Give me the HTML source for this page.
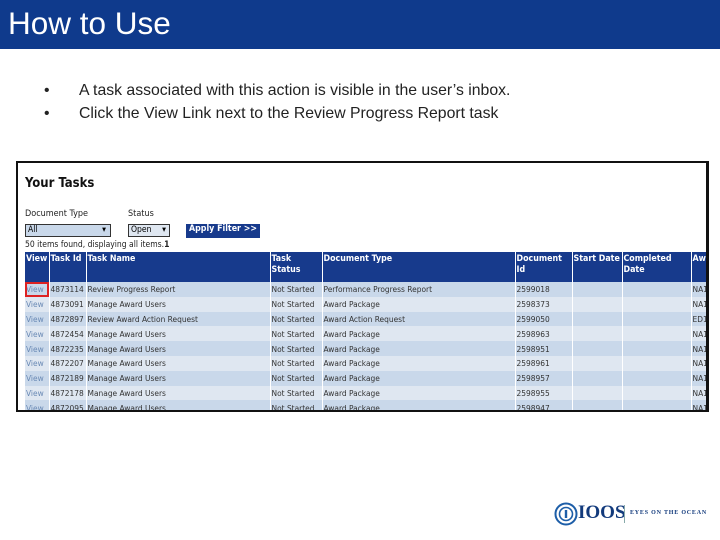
<!DOCTYPE html>
<html><head><meta charset="utf-8"><style>
*{margin:0;padding:0;box-sizing:border-box}
body{width:720px;height:540px;background:#fff;position:relative;overflow:hidden;font-family:"Liberation Sans",sans-serif}
.hdr{position:absolute;left:0;top:0;width:720px;height:49px;background:#0f3a8c}
.hdr h1{position:absolute;left:8px;top:5px;font-size:31.5px;font-weight:normal;color:#fff}
.b{position:absolute;font-size:15.8px;color:#222;white-space:nowrap}
.shot{position:absolute;left:16px;top:161px;width:693px;height:251px;border:2px solid #111;border-right-width:3px;background:#fff;overflow:hidden;font-family:"DejaVu Sans Condensed","DejaVu Sans",sans-serif}
.t{position:absolute;font-size:10px;color:#222;white-space:nowrap}
table{position:absolute;left:7px;top:89px;border-collapse:collapse;font-size:8.3px;table-layout:fixed;width:700px}
td,th{padding:0 1px;height:14.8px;white-space:nowrap;overflow:hidden;text-align:left;border-right:1px solid #fff;line-height:14px}
th{background:#173a8c;color:#fff;height:30px;vertical-align:top;line-height:11px;padding-top:2px;font-size:8.8px}
tr.a td{background:#c9d8ea}
tr.c td{background:#dfe7f1}
td{color:#333}
td.v{color:#6a8ab5}
</style></head><body>
<div class="hdr"><h1>How to Use</h1></div>
<div class="b" style="left:44px;top:82px">•</div>
<div class="b" style="left:79px;top:82px">A task associated with this action is visible in the user’s inbox.</div>
<div class="b" style="left:44px;top:105px">•</div>
<div class="b" style="left:79px;top:105px">Click the View Link next to the Review Progress Report task</div>
<div class="shot">
<div class="t" style="left:7px;top:13px;font-size:13px;font-weight:bold;color:#111">Your Tasks</div>
<div class="t" style="left:7px;top:46px;font-size:9px">Document Type</div>
<div class="t" style="left:110px;top:46px;font-size:9px">Status</div>
<div style="position:absolute;left:7px;top:61px;width:86px;height:13px;border:1px solid #333;background:#c9d8ea;font-size:8.5px;padding-left:2px">All<span style="position:absolute;right:4px">▾</span></div>
<div style="position:absolute;left:110px;top:61px;width:42px;height:13px;border:1px solid #333;background:#dfe7f1;font-size:8.5px;padding-left:2px">Open<span style="position:absolute;right:3px">▾</span></div>
<div style="position:absolute;left:168px;top:61px;width:74px;height:14px;background:#173a8c;color:#fff;font-size:8.8px;font-weight:bold;padding-left:3px;white-space:nowrap">Apply Filter &gt;&gt;</div>
<div class="t" style="left:7px;top:77px;font-size:8.5px">50 items found, displaying all items.<b>1</b></div>
<table>
<colgroup><col style="width:24px"><col style="width:37px"><col style="width:184px"><col style="width:52px"><col style="width:193px"><col style="width:57px"><col style="width:50px"><col style="width:69px"><col style="width:34px"></colgroup>
<tr><th>View</th><th>Task Id</th><th>Task Name</th><th>Task<br>Status</th><th>Document Type</th><th>Document<br>Id</th><th>Start Date</th><th>Completed<br>Date</th><th>Aw</th></tr>
<tr class="a"><td class="v" style="outline:2px solid #d22;outline-offset:-2px">View</td><td>4873114</td><td>Review Progress Report</td><td>Not Started</td><td>Performance Progress Report</td><td>2599018</td><td></td><td></td><td>NA1</td></tr>
<tr class="c"><td class="v">View</td><td>4873091</td><td>Manage Award Users</td><td>Not Started</td><td>Award Package</td><td>2598373</td><td></td><td></td><td>NA1</td></tr>
<tr class="a"><td class="v">View</td><td>4872897</td><td>Review Award Action Request</td><td>Not Started</td><td>Award Action Request</td><td>2599050</td><td></td><td></td><td>ED1</td></tr>
<tr class="c"><td class="v">View</td><td>4872454</td><td>Manage Award Users</td><td>Not Started</td><td>Award Package</td><td>2598963</td><td></td><td></td><td>NA1</td></tr>
<tr class="a"><td class="v">View</td><td>4872235</td><td>Manage Award Users</td><td>Not Started</td><td>Award Package</td><td>2598951</td><td></td><td></td><td>NA1</td></tr>
<tr class="c"><td class="v">View</td><td>4872207</td><td>Manage Award Users</td><td>Not Started</td><td>Award Package</td><td>2598961</td><td></td><td></td><td>NA1</td></tr>
<tr class="a"><td class="v">View</td><td>4872189</td><td>Manage Award Users</td><td>Not Started</td><td>Award Package</td><td>2598957</td><td></td><td></td><td>NA1</td></tr>
<tr class="c"><td class="v">View</td><td>4872178</td><td>Manage Award Users</td><td>Not Started</td><td>Award Package</td><td>2598955</td><td></td><td></td><td>NA1</td></tr>
<tr class="a"><td class="v">View</td><td>4872095</td><td>Manage Award Users</td><td>Not Started</td><td>Award Package</td><td>2598947</td><td></td><td></td><td>NA1</td></tr>
</table>
</div>
<svg style="position:absolute;left:554px;top:502px" width="24" height="24" viewBox="0 0 24 24"><circle cx="12" cy="12" r="10.5" fill="none" stroke="#1d5ea8" stroke-width="2"/><circle cx="12" cy="12" r="6.5" fill="none" stroke="#1d5ea8" stroke-width="1.6"/><rect x="10.8" y="8" width="2.4" height="8" fill="#1d5ea8"/></svg>
<div style="position:absolute;left:578px;top:502px;font-family:'Liberation Serif',serif;font-weight:bold;font-size:19px;color:#123a7c">IOOS</div>
<div style="position:absolute;left:624px;top:505px;width:1px;height:18px;background:#8aa"></div>
<div style="position:absolute;left:630px;top:510px;font-family:'Liberation Serif',serif;font-weight:bold;font-size:6px;letter-spacing:0.8px;color:#123a7c;white-space:nowrap">EYES ON THE OCEAN</div>
</body></html>
